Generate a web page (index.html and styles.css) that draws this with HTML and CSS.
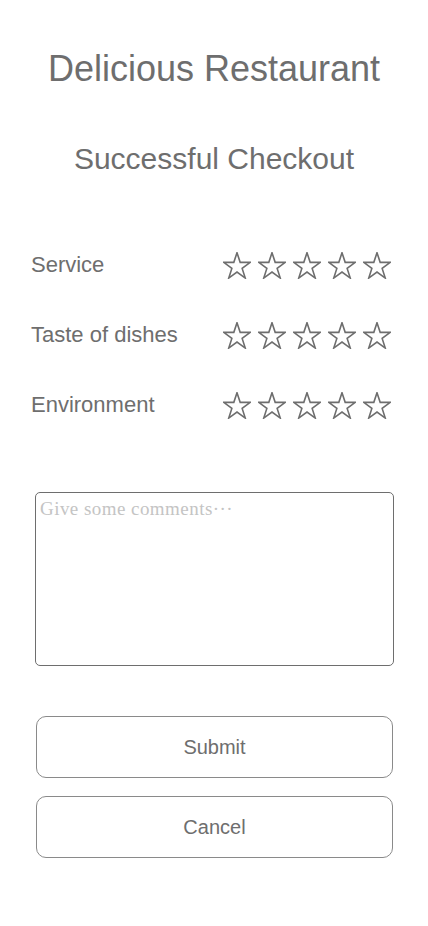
FILE: index.html
```html
<!DOCTYPE html>
<html lang="en">
<head>
<meta charset="utf-8">
<title>Delicious Restaurant</title>
<link rel="stylesheet" href="styles.css">
</head>
<body>
<svg class="defs" width="0" height="0" aria-hidden="true">
  <symbol id="star" viewBox="0 0 28 27">
    <polygon points="14,0.7 17.18,10.33 27.31,10.37 19.14,16.37 22.23,26.03 14,20.1 5.77,26.03 8.86,16.37 0.69,10.37 10.82,10.33" fill="none" stroke="#6e6e6e" stroke-width="1.6" stroke-linejoin="miter"/>
  </symbol>
</svg>
<main class="page">
  <h1 class="title">Delicious Restaurant</h1>
  <h2 class="subtitle">Successful Checkout</h2>
  <section class="ratings">
    <div class="row">
      <span class="label">Service</span>
      <div class="stars">
        <svg class="star"><use href="#star"/></svg>
        <svg class="star"><use href="#star"/></svg>
        <svg class="star"><use href="#star"/></svg>
        <svg class="star"><use href="#star"/></svg>
        <svg class="star"><use href="#star"/></svg>
      </div>
    </div>
    <div class="row">
      <span class="label">Taste of dishes</span>
      <div class="stars">
        <svg class="star"><use href="#star"/></svg>
        <svg class="star"><use href="#star"/></svg>
        <svg class="star"><use href="#star"/></svg>
        <svg class="star"><use href="#star"/></svg>
        <svg class="star"><use href="#star"/></svg>
      </div>
    </div>
    <div class="row">
      <span class="label">Environment</span>
      <div class="stars">
        <svg class="star"><use href="#star"/></svg>
        <svg class="star"><use href="#star"/></svg>
        <svg class="star"><use href="#star"/></svg>
        <svg class="star"><use href="#star"/></svg>
        <svg class="star"><use href="#star"/></svg>
      </div>
    </div>
  </section>
  <textarea class="comments" placeholder="Give some comments···"></textarea>
  <div class="actions">
    <button class="btn" type="button">Submit</button>
    <button class="btn" type="button">Cancel</button>
  </div>
</main>
</body>
</html>
```
FILE: styles.css
```css
* { box-sizing: border-box; }
html, body { margin: 0; padding: 0; background: #fff; }
body {
  font-family: "Liberation Sans", Arial, sans-serif;
  color: #6e6e6e;
}
.defs { position: absolute; width: 0; height: 0; overflow: hidden; }
.page {
  width: 428px;
  display: flex;
  flex-direction: column;
}
.title {
  margin: 47px 0 0;
  font-size: 36px;
  line-height: 44px;
  font-weight: normal;
  text-align: center;
}
.subtitle {
  margin: 50px 0 0;
  font-size: 30px;
  line-height: 36px;
  font-weight: normal;
  text-align: center;
}
.ratings {
  margin-top: 68px;
  display: flex;
  flex-direction: column;
  gap: 30px;
}
.row {
  height: 40px;
  display: flex;
  align-items: center;
  justify-content: space-between;
  padding: 0 37px 0 31px;
}
.label {
  font-size: 22px;
  line-height: 26px;
}
.stars {
  display: flex;
  gap: 7px;
}
.star {
  width: 28px;
  height: 27px;
  overflow: visible;
}
.comments {
  display: block;
  margin: 67px 0 0 35px;
  width: 359px;
  height: 174px;
  border: 1px solid #6e6e6e;
  border-radius: 5px;
  padding: 5px 4px;
  font-family: "Liberation Serif", "Times New Roman", serif;
  font-size: 19px;
  letter-spacing: 0.45px;
  color: #555;
  resize: none;
  outline: none;
}
.comments::placeholder { color: #c4c4c4; }
.actions {
  margin: 50px 35px 0 36px;
  display: flex;
  flex-direction: column;
  gap: 18px;
}
.btn {
  height: 62px;
  width: 100%;
  background: #fff;
  border: 1px solid #8a8a8a;
  border-radius: 10px;
  font-family: "Liberation Sans", Arial, sans-serif;
  font-size: 20px;
  color: #6e6e6e;
  cursor: pointer;
}
```
